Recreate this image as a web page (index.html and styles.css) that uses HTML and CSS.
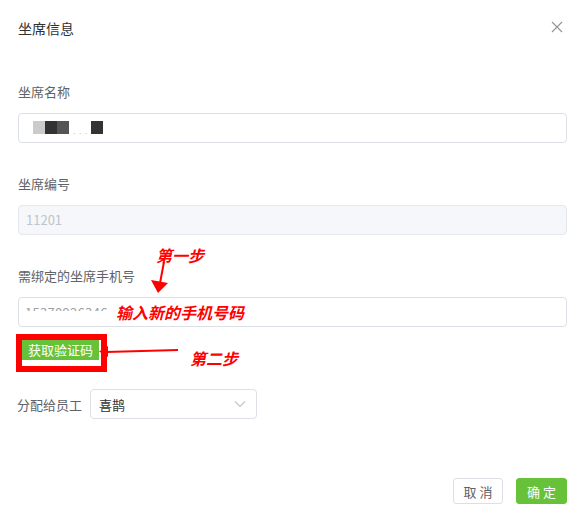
FILE: index.html
```html
<!DOCTYPE html>
<html lang="zh">
<head>
<meta charset="utf-8">
<link rel="stylesheet" href="styles.css">
</head>
<body>
<div class="dialog">
  <div class="header">
    <span class="title">坐席信息</span>
    <svg class="close" width="12" height="12" viewBox="0 0 12 12"><path d="M1 1L11 11M11 1L1 11" stroke="#909399" stroke-width="1.1" fill="none"/></svg>
  </div>
  <div class="body">
    <div class="item">
      <div class="label">坐席名称</div>
      <div class="input">
        <span class="blk b1"></span><span class="blk b2"></span><span class="blk b3"></span><span class="dots">. . .</span><span class="blk b2"></span>
      </div>
    </div>
    <div class="item">
      <div class="label">坐席编号</div>
      <div class="input disabled">11201</div>
    </div>
    <div class="item">
      <div class="label">需绑定的坐席手机号</div>
      <div class="input"><span class="masked">15370926346</span></div>
    </div>
    <div class="codebox">
      <div class="codebtn">获取验证码</div>
    </div>
    <div class="row">
      <div class="rowlabel">分配给员工</div>
      <div class="select">
        <span>喜鹊</span>
        <svg width="12" height="8" viewBox="0 0 12 8"><path d="M1 1.5L6 6.5L11 1.5" stroke="#c0c4cc" stroke-width="1.1" fill="none"/></svg>
      </div>
    </div>
  </div>
  <div class="footer">
    <button class="btn">取 消</button>
    <button class="btn primary">确 定</button>
  </div>

  <div class="note n1">第一步</div>
  <div class="note n2">输入新的手机号码</div>
  <div class="note n3">第二步</div>
  <svg class="arrows" width="582" height="523" viewBox="0 0 582 523">
    <path d="M164 262L160 283" stroke="#f00" stroke-width="2" fill="none"/>
    <path d="M151 280L168 283L158 293Z" fill="#f00"/>
    <path d="M178 350L106 352" stroke="#f00" stroke-width="2" fill="none"/>
    <path d="M108 346L108 357L99 351.5Z" fill="#f00"/>
  </svg>
</div>
</body>
</html>
```

FILE: styles.css
```css
* { box-sizing: border-box; }
html, body { margin: 0; padding: 0; background: #fff; }
body {
  font-family: "Noto Sans CJK SC", "Liberation Sans", sans-serif;
  color: #606266;
  width: 582px;
  height: 523px;
  overflow: hidden;
}
.dialog { position: relative; width: 582px; height: 523px; }
.header {
  display: flex;
  justify-content: space-between;
  align-items: center;
  padding: 16px 19px 0 18px;
  height: 40px;
}
.title { font-size: 14px; line-height: 24px; color: #303133; }
.close { margin-top: -2px; }
.body { padding: 31px 15px 0 18px; }
.item { margin-bottom: 20px; }
.label { font-size: 13px; line-height: 42px; height: 42px; }
.input {
  height: 30px;
  border: 1px solid #dcdfe6;
  border-radius: 4px;
  padding: 0 14px;
  font-size: 13px;
  line-height: 28px;
  display: flex;
  align-items: center;
  color: #606266;
}
.input.disabled { background: #f5f7fa; border-color: #e4e7ed; color: #c0c4cc; padding-left: 7px; }
.blk { display: inline-block; width: 12px; height: 13px; margin-top: -2px; }
.b1 { background: #cbcbcb; }
.b2 { background: #333; }
.b3 { background: #555; }
.dots { font-size: 8px; color: #bbb; letter-spacing: 1px; margin: 6px 3px 0 4px; }
.masked {
  display: inline-block;
  line-height: 16px;
  color: #a0a0a0;
  font-size: 13px;
  clip-path: inset(0 0 62% 0);
  margin-left: -8px;
  margin-top: 2px;
  letter-spacing: 0.3px;
}
.codebox {
  margin-top: -13px;
  width: 91px;
  height: 38px;
  border: 6px solid #f00;
  margin-left: -2px;
  background: #fff;
}
.codebtn {
  width: 77px;
  height: 20px;
  background: #67c23a;
  color: #fff;
  font-size: 13px;
  line-height: 20px;
  padding-left: 6px;
}
.row { display: flex; align-items: center; margin-top: 17px; }
.rowlabel { font-size: 13px; width: 73px; margin-left: -1px; }
.select {
  width: 167px;
  height: 30px;
  border: 1px solid #dcdfe6;
  border-radius: 4px;
  display: flex;
  align-items: center;
  justify-content: space-between;
  padding: 0 10px 0 8px;
  font-size: 13px;
  color: #303133;
}
.footer {
  position: absolute;
  left: 0; right: 0; top: 478px;
  display: flex;
  justify-content: flex-end;
  gap: 13px;
  padding-right: 15px;
}
.btn {
  height: 26px;
  width: 50px;
  border: 1px solid #dcdfe6;
  background: #fff;
  border-radius: 3px;
  font-family: "Noto Sans CJK SC", sans-serif;
  font-size: 13px;
  color: #606266;
  padding: 0;
}
.btn.primary { background: #67c23a; border-color: #67c23a; color: #fff; width: 51px; }
.note {
  position: absolute;
  color: #f00;
  font-style: italic;
  font-weight: bold;
  font-size: 16px;
  line-height: 18px;
}
.n1 { left: 156px; top: 246px; }
.n2 { left: 116px; top: 303px; }
.n3 { left: 190px; top: 349px; }
.arrows { position: absolute; left: 0; top: 0; pointer-events: none; }
```
